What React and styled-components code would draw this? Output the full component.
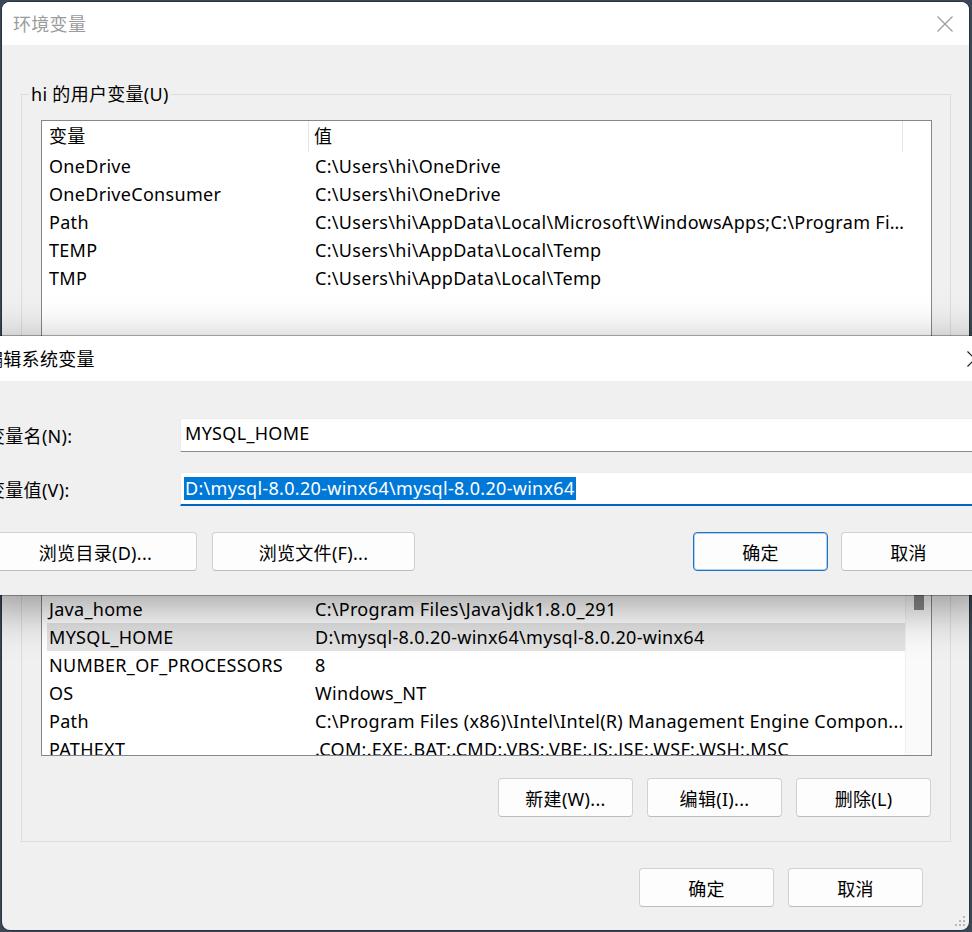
import styled, { createGlobalStyle } from 'styled-components';

const GlobalStyle = createGlobalStyle`
  html, body {
    margin: 0;
    padding: 0;
    background: #3b4757;
    overflow: hidden;
  }

  body {
    font-family: 'Noto Sans', 'Noto Sans CJK SC', sans-serif;
    font-size: 18px;
    letter-spacing: 0.3px;
    color: #000;
  }

  * {
    box-sizing: border-box;
  }
`;

const Page = styled.div`
  position: relative;
  width: 972px;
  height: 932px;
  padding: 2px 3px 2px 2px;
  overflow: hidden;
`;

const Dialog = styled.div`
  position: relative;
  display: flex;
  flex-direction: column;
  height: 100%;
  background: #f0f0f0;
  border-radius: 8px;
  box-shadow: 0 0 0 1px rgba(0, 0, 0, 0.28);
  overflow: hidden;
`;

const TitleBar = styled.div`
  display: flex;
  align-items: center;
  justify-content: space-between;
  height: ${(p) => p.$height}px;
  flex-shrink: 0;
  padding-left: 11px;
  background: #fff;
  color: ${(p) => (p.$inactive ? '#9b9b9b' : '#000')};
`;

const Title = styled.span`
  line-height: 24px;
`;

const CloseButton = styled.div`
  display: flex;
  align-items: center;
  justify-content: center;
  width: 48px;
  height: 100%;
`;

const Body = styled.div`
  display: flex;
  flex-direction: column;
  flex: 1;
  padding: 37px 18px 0 19px;
`;

const GroupBox = styled.fieldset`
  margin: ${(p) => p.$top || 0}px 0 0;
  padding: 14px 18px 24px 19px;
  border: 1px solid #dcdcdc;
  min-width: 0;
`;

const Legend = styled.legend`
  margin-left: -12px;
  padding: 0 2px;
  line-height: 24px;
`;

const ListBox = styled.div`
  display: flex;
  height: ${(p) => p.$height}px;
  background: #fff;
  border: 1px solid #828790;
  overflow: hidden;
`;

const Rows = styled.div`
  width: 863px;
  flex-shrink: 0;
  overflow: hidden;
`;

const ListHeader = styled.div`
  display: grid;
  grid-template-columns: 267px 594px;
  height: 31px;
`;

const HeaderCell = styled.div`
  padding-left: ${(p) => p.$pad}px;
  line-height: 31px;
  border-right: 1px solid #e5e5e5;
`;

const Row = styled.div`
  display: grid;
  grid-template-columns: 262px 1fr;
  margin-left: 5px;
  height: 28px;
  line-height: 28px;
  background: ${(p) => (p.$selected ? '#e3e3e3' : 'transparent')};
`;

const Cell = styled.div`
  padding-left: ${(p) => p.$pad}px;
  white-space: nowrap;
  overflow: hidden;
  text-overflow: ellipsis;
`;

const Scrollbar = styled.div`
  flex: 1;
  background: #fafafa;
  border-left: 1px solid #f0f0f0;
  display: flex;
  justify-content: center;
`;

const Thumb = styled.div`
  width: 10px;
  height: 60px;
  margin-top: 70px;
  background: #8a8a8a;
`;

const ButtonRow = styled.div`
  display: flex;
  justify-content: flex-end;
  gap: ${(p) => p.$gap || 13}px;
  margin-top: ${(p) => p.$top || 0}px;
  padding-right: ${(p) => p.$right || 0}px;
`;

const ButtonGroup = styled.div`
  display: flex;
  gap: ${(p) => p.$gap}px;
`;

const Button = styled.div`
  display: flex;
  align-items: center;
  justify-content: center;
  width: ${(p) => p.$width || 135}px;
  height: 39px;
  flex-shrink: 0;
  background: #fdfdfd;
  border: 1px solid ${(p) => (p.$primary ? '#1f74c8' : '#d1d1d1')};
  border-bottom-color: ${(p) => (p.$primary ? '#1f74c8' : '#bdbdbd')};
  border-radius: 4px;
  box-shadow: ${(p) => (p.$primary ? 'inset 0 0 0 1px rgba(31, 116, 200, 0.35)' : 'none')};
  white-space: nowrap;
`;

const Grip = styled.svg`
  position: absolute;
  right: 2px;
  bottom: 2px;
`;

/* the edit dialog sits over the main window */
const EditDialog = styled.div`
  position: absolute;
  left: -26px;
  top: 336px;
  width: 1025px;
  height: 259px;
  display: flex;
  flex-direction: column;
  background: #f0f0f0;
  box-shadow: 0 0 0 1px rgba(0, 0, 0, 0.3), 0 12px 44px rgba(0, 0, 0, 0.4);
`;

const EditBody = styled.div`
  flex: 1;
  padding: 37px 23px 0 13px;
`;

const FieldGrid = styled.div`
  display: grid;
  grid-template-columns: 193px 1fr;
  row-gap: 20px;
  align-items: center;
`;

const FieldLabel = styled.label`
  white-space: nowrap;
`;

const TextBox = styled.div`
  display: flex;
  align-items: center;
  height: 34px;
  padding-left: ${(p) => (p.$focused ? 3 : 4)}px;
  padding-bottom: ${(p) => (p.$focused ? 1 : 4)}px;
  background: #fff;
  border: 1px solid #ececec;
  border-bottom: ${(p) => (p.$focused ? '2px solid #0067c0' : '1px solid #8a8a8a')};
  border-radius: 3px 3px 0 0;
  white-space: nowrap;
`;

const Selection = styled.span`
  background: #0078d7;
  color: #fff;
  padding: 0 1px;
  line-height: 23px;
`;

const ActionRow = styled.div`
  display: flex;
  align-items: center;
  justify-content: space-between;
  margin-top: 26px;
  padding-left: 7px;
`;

const userVars = [
  ['OneDrive', 'C:\\Users\\hi\\OneDrive'],
  ['OneDriveConsumer', 'C:\\Users\\hi\\OneDrive'],
  ['Path', 'C:\\Users\\hi\\AppData\\Local\\Microsoft\\WindowsApps;C:\\Program Fi...'],
  ['TEMP', 'C:\\Users\\hi\\AppData\\Local\\Temp'],
  ['TMP', 'C:\\Users\\hi\\AppData\\Local\\Temp'],
];

const systemVars = [
  ['CLASSPATH', '.;%JAVA_HOME%\\lib;%JAVA_HOME%\\lib\\tools.jar'],
  ['ComSpec', 'C:\\WINDOWS\\system32\\cmd.exe'],
  ['DriverData', 'C:\\Windows\\System32\\Drivers\\DriverData'],
  ['Java_home', 'C:\\Program Files\\Java\\jdk1.8.0_291'],
  ['MYSQL_HOME', 'D:\\mysql-8.0.20-winx64\\mysql-8.0.20-winx64'],
  ['NUMBER_OF_PROCESSORS', '8'],
  ['OS', 'Windows_NT'],
  ['Path', 'C:\\Program Files (x86)\\Intel\\Intel(R) Management Engine Compon...'],
  ['PATHEXT', '.COM;.EXE;.BAT;.CMD;.VBS;.VBE;.JS;.JSE;.WSF;.WSH;.MSC'],
  ['PROCESSOR_ARCHITECTURE', 'AMD64'],
];

const CloseIcon = ({ color }) => (
  <svg width="16" height="16" viewBox="0 0 16 16">
    <path d="M0.5 0.5 L15.5 15.5 M15.5 0.5 L0.5 15.5" stroke={color} strokeWidth="1.2" fill="none" />
  </svg>
);

const VarList = ({ vars, height, selected, scroll }) => (
  <ListBox $height={height}>
    <Rows>
      <ListHeader>
        <HeaderCell $pad={7}>变量</HeaderCell>
        <HeaderCell $pad={5}>值</HeaderCell>
      </ListHeader>
      {vars.map(([name, value]) => (
        <Row key={name + value} $selected={name === selected}>
          <Cell $pad={2}>{name}</Cell>
          <Cell $pad={6}>{value}</Cell>
        </Row>
      ))}
    </Rows>
    {scroll && (
      <Scrollbar>
        <Thumb />
      </Scrollbar>
    )}
  </ListBox>
);

const App = () => {
  return (
    <Page>
      <GlobalStyle />
      <Dialog>
        <TitleBar $height={43} $inactive>
          <Title>环境变量</Title>
          <CloseButton>
            <CloseIcon color="#9b9b9b" />
          </CloseButton>
        </TitleBar>

        <Body>
          {/* user variables */}
          <GroupBox>
            <Legend>hi 的用户变量(U)</Legend>
            <VarList vars={userVars} height={222} />
            <ButtonRow $top={23} $gap={14} $right={1}>
              <Button>新建(N)...</Button>
              <Button>编辑(E)...</Button>
              <Button>删除(D)</Button>
            </ButtonRow>
          </GroupBox>

          {/* system variables */}
          <GroupBox $top={12}>
            <Legend>系统变量(S)</Legend>
            <VarList vars={systemVars} height={277} selected="MYSQL_HOME" scroll />
            <ButtonRow $top={22} $gap={14} $right={1}>
              <Button>新建(W)...</Button>
              <Button>编辑(I)...</Button>
              <Button>删除(L)</Button>
            </ButtonRow>
          </GroupBox>

          <ButtonRow $top={26} $gap={14} $right={28}>
            <Button>确定</Button>
            <Button>取消</Button>
          </ButtonRow>
        </Body>

        <Grip width="14" height="14" viewBox="0 0 14 14">
          {[
            [10, 2], [6, 6], [10, 6], [2, 10], [6, 10], [10, 10],
          ].map(([x, y]) => (
            <rect key={x + '-' + y} x={x} y={y} width="2" height="2" fill="#b8b8b8" />
          ))}
        </Grip>
      </Dialog>

      {/* edit system variable dialog */}
      <EditDialog>
        <TitleBar $height={45}>
          <Title>编辑系统变量</Title>
          <CloseButton>
            <CloseIcon color="#1a1a1a" />
          </CloseButton>
        </TitleBar>
        <EditBody>
          <FieldGrid>
            <FieldLabel>变量名(N):</FieldLabel>
            <TextBox>MYSQL_HOME</TextBox>
            <FieldLabel>变量值(V):</FieldLabel>
            <TextBox $focused>
              <Selection>D:\mysql-8.0.20-winx64\mysql-8.0.20-winx64</Selection>
            </TextBox>
          </FieldGrid>
          <ActionRow>
            <ButtonGroup $gap={15}>
              <Button $width={203}>浏览目录(D)...</Button>
              <Button $width={203}>浏览文件(F)...</Button>
            </ButtonGroup>
            <ButtonGroup $gap={13}>
              <Button $primary>确定</Button>
              <Button>取消</Button>
            </ButtonGroup>
          </ActionRow>
        </EditBody>
      </EditDialog>
    </Page>
  );
};

export default App;
